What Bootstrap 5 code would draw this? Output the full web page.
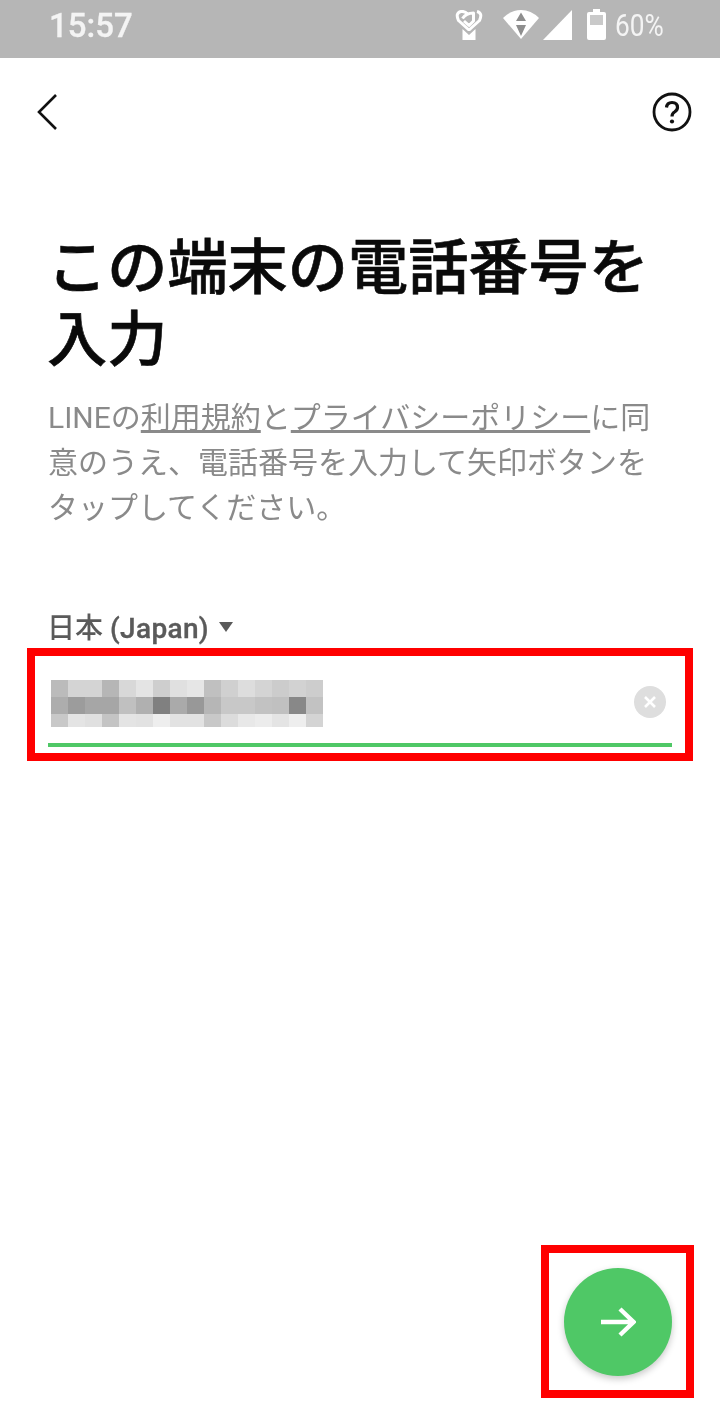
<!DOCTYPE html>
<html lang="ja">
<head>
  <meta charset="UTF-8" />
  <meta name="viewport" content="width=device-width, initial-scale=1.0" />
  <title>電話番号を入力</title>
  <link href="https://cdn.jsdelivr.net/npm/bootstrap@5.3.3/dist/css/bootstrap.min.css" rel="stylesheet" />
  <style>
    body { font-family: Roboto, "Noto Sans CJK JP", sans-serif; background: #fff; }
    .page-wrap { width: 720px; height: 1424px; will-change: transform; }
    .status-bar { height: 58px; background: #b6b6b6; color: #f4f4f4; padding: 0 57px 0 49px; }
    .status-time { font-size: 34px; font-weight: 500; line-height: 1; margin-top: -9px; transform: scaleX(.97); transform-origin: left; -webkit-text-stroke: .3px #f4f4f4; }
    .status-pct { font-size: 32px; line-height: 1; transform: scaleX(.82); transform-origin: left; width: 48px; margin-left: 9px; white-space: nowrap; }
    .status-icons { margin-top: -9px; }
    .top-nav { height: 108px; padding: 0 28px 0 36px; }
    .page-title { font-family: Roboto, "Noto Sans CJK JP", sans-serif; font-size: 60.2px; font-weight: 500; -webkit-text-stroke: .6px #0a0a0a; line-height: 72px; color: #0a0a0a; margin: 67px 0 0; padding: 0 47px; }
    .page-desc { font-family: Roboto, "Noto Sans CJK JP", sans-serif; font-size: 30px; line-height: 45px; color: #8a8a8a; margin: 18px 0 0; padding: 0 48px; }
    .page-desc a { color: inherit; }
    .country-row { margin: 78px 0 0; padding: 0 47px; font-size: 28px; line-height: 36px; color: #5a5a5a; font-weight: 500; }
    .country-row .jp { font-family: "Noto Sans CJK JP", sans-serif; font-weight: 500; }
    .country-en { letter-spacing: .35px; -webkit-text-stroke: .35px #5a5a5a; }
    .caret-down { width: 0; height: 0; border-left: 7px solid transparent; border-right: 7px solid transparent; border-top: 10px solid #5a5a5a; margin-left: 10px; margin-top: -2px; }
    .phone-frame { margin: 1px 27px 0; height: 113px; border: 8px solid #f00; padding: 0 13px; }
    .phone-inner { border-bottom: 4px solid #4fc866; padding-left: 3px; margin-top: -4px; padding-top: 28px; height: 95px; }
    .mosaic { display: grid; grid-template-columns: repeat(16, 17px); grid-template-rows: 17px 17px 13px; }
    .clear-btn { width: 32px; height: 32px; border-radius: 50%; background: #dedede; margin-right: 6px; margin-top: 6px; }
    .fab-frame { width: 153px; height: 153px; border: 8px solid #f00; margin: 0 26px 26px auto; }
    .fab-btn { width: 108px; height: 108px; border-radius: 50%; background: #4fc866; border: 0; padding: 0; box-shadow: 0 3px 7px rgba(0,0,0,.22); margin-left: 15px; margin-top: 15px; }
  </style>
</head>
<body>
  <div class="page-wrap d-flex flex-column">
    <div class="status-bar d-flex align-items-center justify-content-between">
      <div class="status-time">15:57</div>
      <div class="status-icons d-flex align-items-center">
        <svg width="28" height="30" viewBox="0 0 28 30" fill="none">
          <path d="M14 20 L3.5 10.5 Q0 3 6 1.5 Q10 1 12.5 4 M14 20 L24.5 10.5 Q28 3 22 1.5 M7.5 8.5 Q11 3 18.5 3 L18.5 11 L14 15.5 L9 11" stroke="#fff" stroke-width="3" stroke-linejoin="round"/>
          <path d="M7.5 19 L14 25 L20.5 19 V30 H7.5 Z" fill="#fff"/>
        </svg>
        <svg style="margin-left:20px" width="36" height="29" viewBox="0 0 36 29">
          <path d="M0 8 Q8 0 18 0 Q28 0 36 8 L18 29 Z" fill="#fff"/>
          <path d="M18 2.5 L23 11 H13 Z M18 26 L13 15 H23 Z" fill="#8e8e8e"/>
        </svg>
        <svg style="margin-left:4px" width="29" height="30" viewBox="0 0 29 30"><path d="M29 0 V30 H0 Z" fill="#fff"/></svg>
        <svg style="margin-left:15px" width="19" height="31" viewBox="0 0 19 31">
          <path d="M6 0 H13 V3 H17 Q19 3 19 5 V29 Q19 31 17 31 H2 Q0 31 0 29 V5 Q0 3 2 3 H6 Z" fill="#fff"/>
          <rect x="3" y="6" width="13" height="10" fill="#c9c9c9"/>
        </svg>
        <div class="status-pct">60%</div>
      </div>
    </div>

    <div class="top-nav d-flex align-items-center justify-content-between">
      <svg width="24" height="38" viewBox="0 0 24 38" fill="none"><path d="M20 2 L3 19 L20 36" stroke="#111" stroke-width="2.6"/></svg>
      <svg width="40" height="40" viewBox="0 0 40 40" fill="none">
        <circle cx="20" cy="20" r="18" stroke="#111" stroke-width="2.8"/>
        <path d="M14.5 15.5 Q15 10.5 20 10.5 Q25.5 10.5 25.5 15.5 Q25.5 18 22.5 20 Q20 21.5 20 24.5" stroke="#111" stroke-width="3.2"/>
        <circle cx="20" cy="29.5" r="2.1" fill="#111"/>
      </svg>
    </div>

    <h1 class="page-title">この端末の電話番号を<br>入力</h1>
    <p class="page-desc">LINEの<a href="#">利用規約</a>と<a href="#">プライバシーポリシー</a>に同<br>意のうえ、電話番号を入力して矢印ボタンを<br>タップしてください。</p>

    <div class="country-row d-flex align-items-center">
      <span><span class="jp">日本</span> <span class="country-en">(Japan)</span></span>
      <span class="caret-down"></span>
    </div>

    <div class="phone-frame">
      <div class="phone-inner d-flex justify-content-between align-items-start">
        <div class="mosaic" id="mosaic"></div>
        <div class="clear-btn d-flex align-items-center justify-content-center">
          <svg width="14" height="14" viewBox="0 0 14 14"><path d="M2 2 L12 12 M12 2 L2 12" stroke="#fff" stroke-width="2.6"/></svg>
        </div>
      </div>
    </div>

    <div class="fab-frame mt-auto">
      <button class="fab-btn d-flex align-items-center justify-content-center" type="button">
        <svg width="36" height="30" viewBox="0 0 36 30" fill="none"><path d="M1 15 H33 M20 2 L33.5 15 L20 28" stroke="#fff" stroke-width="4.4"/></svg>
      </button>
    </div>
  </div>

  <script src="https://cdn.jsdelivr.net/npm/bootstrap@5.3.3/dist/js/bootstrap.bundle.min.js"></script>
  <script>
    // モザイク部分の色
    const mosaicColors = [
      "bb","d4","d4","b6","d8","e4","ce","e0","e6","c0","d0","dd","d4","cc","d2","cd",
      "ad","9c","a6","a6","c0","b0","80","aa","98","b6","c8","c8","c2","c0","88","c2",
      "c8","e4","e0","c4","e4","e2","ee","e2","e2","c8","dc","e8","ec","e4","ee","d4"
    ];
    const mosaic = document.getElementById("mosaic");
    mosaicColors.forEach(c => {
      const cell = document.createElement("div");
      cell.style.background = "#" + c + c + c;
      mosaic.appendChild(cell);
    });
  </script>
</body>
</html>
